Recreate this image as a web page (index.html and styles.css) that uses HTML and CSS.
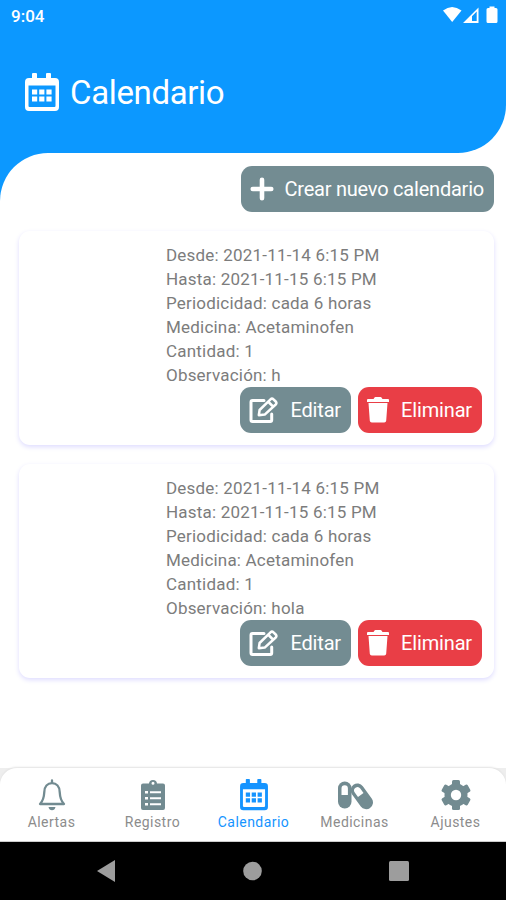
FILE: index.html
```html
<!DOCTYPE html>
<html lang="es">
<head>
<meta charset="utf-8">
<title>Calendario</title>
<link rel="stylesheet" href="styles.css">
</head>
<body>
<svg class="defs" aria-hidden="true">
  <symbol id="calendar" viewBox="0 0 34 39">
    <path fill-rule="evenodd" d="M7 1q0-1 1-1h3q1 0 1 1v4h9V1q0-1 1-1h3q1 0 1 1v4h4q4 0 4 4v25q0 4-4 4H4q-4 0-4-4V9q0-4 4-4h3zM3.500 12.500V33q0 1 1 1h25q1 0 1-1V12.500z"/>
    <path d="M7 16.500h5.200v5H7zm7.200 0h5.200v5h-5.200zm7.200 0h5.200v5h-5.200zM7 23.500h5.200v5H7zm7.200 0h5.200v5h-5.200zm7.200 0h5.200v5h-5.200z"/>
  </symbol>
  <symbol id="edit" viewBox="0 0 30 26">
    <g fill="none" stroke="currentColor" stroke-width="3" stroke-linejoin="round" stroke-linecap="round">
      <path d="M15 3.500H3.500Q2 3.500 2 5v18q0 1.500 1.500 1.500h17.700q1.500 0 1.500-1.500v-6"/>
      <path d="M9.800 18.200l.8-5.200L21.500 2.300q1.500-1.500 3 0l2.200 2.200q1.500 1.500 0 3L15.700 17.600zM19.500 5l4.500 4.500" stroke-width="2.500"/>
    </g>
  </symbol>
  <symbol id="trash" viewBox="0 0 22 26">
    <path d="M1 2h5.500l1-1.500Q7.800 0 8.400 0h5.200q.6 0 .9.500l1 1.500H21q1 0 1 1v2H0V3q0-1 1-1zM1.500 6h19l-1.300 17.700q-.2 1.800-2 1.800H4.800q-1.800 0-2-1.800z"/>
  </symbol>
</svg>
<div class="phone">
  <header class="header">
    <div class="status">
      <span>9:04</span>
      <svg width="56" height="18" viewBox="0 0 56 18">
        <path d="M0 4.500Q9 -2.500 18.500 4.500L9.200 16z"/>
        <path fill-rule="evenodd" d="M20 17L35.500 1.500V17zM29 10.200V15h4.700V5.500z"/>
        <path d="M46.500 2V.500h5V2H53q1.500 0 1.500 1.500v12Q54.500 17 53 17h-8q-1.500 0-1.500-1.500v-12Q43.500 2 45 2z"/>
      </svg>
    </div>
    <h1><svg class="title-icon"><use href="#calendar"/></svg>Calendario</h1>
  </header>
  <div class="sheet-back">
    <main class="sheet">
      <button class="btn create"><svg width="24" height="24" viewBox="0 0 22 22"><path d="M11 2.500v17M2.500 11h17" fill="none" stroke="currentColor" stroke-width="4.200" stroke-linecap="round"/></svg><span>Crear nuevo calendario</span></button>
      <article class="card">
        <ul>
          <li>Desde: 2021-11-14 6:15 PM</li>
          <li>Hasta: 2021-11-15 6:15 PM</li>
          <li>Periodicidad: cada 6 horas</li>
          <li>Medicina: Acetaminofen</li>
          <li>Cantidad: 1</li>
          <li>Observación: h</li>
        </ul>
        <div class="actions">
          <button class="btn edit"><svg width="30" height="26"><use href="#edit"/></svg><span>Editar</span></button>
          <button class="btn delete"><svg width="22" height="26"><use href="#trash"/></svg><span>Eliminar</span></button>
        </div>
      </article>
      <article class="card">
        <ul>
          <li>Desde: 2021-11-14 6:15 PM</li>
          <li>Hasta: 2021-11-15 6:15 PM</li>
          <li>Periodicidad: cada 6 horas</li>
          <li>Medicina: Acetaminofen</li>
          <li>Cantidad: 1</li>
          <li>Observación: hola</li>
        </ul>
        <div class="actions">
          <button class="btn edit"><svg width="30" height="26"><use href="#edit"/></svg><span>Editar</span></button>
          <button class="btn delete"><svg width="22" height="26"><use href="#trash"/></svg><span>Eliminar</span></button>
        </div>
      </article>
    </main>
  </div>
  <div class="tabs-back">
    <nav class="tabs">
      <a><svg width="28" height="32" viewBox="0 0 28 32"><path d="M14 1.500v2M2 25h24c-3-3-4-6-4.300-12C21.500 7.500 18.500 4.200 14 4.200S6.500 7.500 6.300 13C6 19 5 22 2 25z" fill="none" stroke="currentColor" stroke-width="2.300" stroke-linecap="round" stroke-linejoin="round"/><path d="M10.500 28h7q-.8 3.300-3.500 3.300T10.500 28z"/></svg><span>Alertas</span></a>
      <a><svg width="24" height="32" viewBox="0 0 24 32"><path fill-rule="evenodd" d="M2 4.500h6Q8.300 1 12 1t4 3.500h6q2 0 2 2V29q0 2-2 2H2q-2 0-2-2V6.500q0-2 2-2zm10-1.700a1.500 1.500 0 100 3 1.500 1.500 0 000-3zM4 12v2.500h3V12zm5 .3v1.900h11v-1.900zM4 18v2.500h3V18zm5 .3v1.900h11v-1.900zM4 24v2.500h3V24zm5 .3v1.900h11v-1.900z"/></svg><span>Registro</span></a>
      <a class="active"><svg width="28" height="32"><use href="#calendar"/></svg><span>Calendario</span></a>
      <a><svg width="36" height="32" viewBox="0 0 36 32"><rect x="1" y="2.500" width="13.500" height="27" rx="6.700"/><path class="hole" d="M4.500 16V9.500a3.200 3.200 0 016.400 0V16z"/><g transform="rotate(-36 25 17.500)"><rect x="18.200" y="3" width="13.500" height="28.500" rx="6.700"/><path class="hole" d="M21.500 15.500V10a3.400 3.400 0 016.800 0v5.500z"/></g></svg><span>Medicinas</span></a>
      <a><svg width="32" height="32" viewBox="0 0 32 32"><rect x="12" y="1" width="8" height="30" rx="1.500"/><rect x="12" y="1" width="8" height="30" rx="1.500" transform="rotate(60 16 16)"/><rect x="12" y="1" width="8" height="30" rx="1.500" transform="rotate(120 16 16)"/><circle cx="16" cy="16" r="11.500"/><circle class="hole" cx="16" cy="16" r="5.200"/></svg><span>Ajustes</span></a>
    </nav>
  </div>
  <footer class="system">
    <svg width="18" height="22" viewBox="0 0 18 22"><path d="M0 11L18 0v22z"/></svg>
    <svg width="19" height="22" viewBox="0 0 19 22"><circle cx="9.500" cy="11" r="9.300"/></svg>
    <svg width="20" height="22" viewBox="0 0 20 22"><rect y="1" width="20" height="20" rx="1.500"/></svg>
  </footer>
</div>
</body>
</html>
```
FILE: styles.css
```css
* { box-sizing: border-box; }
body { margin: 0; font-family: Roboto, "Liberation Sans", sans-serif; background: #fff; }
svg { display: block; fill: currentColor; flex: none; }
.defs { display: none; }
.phone { width: 506px; height: 900px; display: flex; flex-direction: column; background: #fff; overflow: hidden; }
.header { height: 153px; flex: none; background: #0c98ff; color: #fff; border-bottom-right-radius: 48px; }
.status { height: 32px; display: flex; align-items: center; justify-content: space-between; padding: 0 7px 0 11px; font-size: 17px; font-weight: 500; }
.status svg { margin-top: -2px; }
h1 { margin: 0; padding: 40px 0 0 25px; display: flex; align-items: center; gap: 11px; font-size: 33px; line-height: 42px; font-weight: 400; letter-spacing: -.35px; }
.title-icon { width: 34px; height: 39px; margin-top: -2px; }
.sheet-back { height: 615px; flex: none; background: linear-gradient(to right, #0c98ff 50px, #fff 50px) 0 0 / 100% 48px no-repeat; }
.sheet { height: 100%; display: flex; flex-direction: column; background: #fff; border-top-left-radius: 48px; padding: 13px 12px 0 19px; }
.btn { height: 46px; border: 0; border-radius: 11px; padding: 0 10px 0 9px; display: flex; align-items: center; justify-content: space-between; color: #fff; background: #738c92; font: 400 20px/24px Roboto, sans-serif; letter-spacing: -.15px; white-space: nowrap; }
.create { width: 253px; align-self: flex-end; margin-bottom: 19px; flex: none; letter-spacing: -.22px; }
.card { height: 214px; flex: none; margin-bottom: 19px; border-radius: 11px; background: #fff; box-shadow: 0 2px 5px #dedcff; padding: 12px 12px 0 147px; }
ul { list-style: none; margin: 0; padding: 0; color: #7c7c7c; font-size: 17px; line-height: 24px; letter-spacing: .2px; }
li { height: 24px; white-space: nowrap; }
.actions { display: flex; justify-content: flex-end; gap: 7px; }
.edit { width: 111px; }
.delete { width: 124px; background: #e93e46; }
.tabs-back { height: 74px; flex: none; background: #eee; }
.tabs { height: 74px; display: grid; grid-template-columns: repeat(5, 1fr); background: #fff; border-radius: 17px 17px 0 0; box-shadow: 0 -1px 2px #e2e2e2; border-bottom: 1px solid #ccc; padding: 11px 0 0 1px; }
.tabs a { display: flex; flex-direction: column; align-items: center; color: #728b91; }
.tabs span { color: #8c8c8c; font-size: 14px; line-height: 20px; margin-top: 1px; letter-spacing: .45px; }
.tabs .active, .tabs .active span { color: #1594ff; }
.hole { fill: #fff; }
.system { flex: 1; background: #000; color: #9d9d9d; display: flex; justify-content: space-between; align-items: center; padding: 0 97px; }
```
